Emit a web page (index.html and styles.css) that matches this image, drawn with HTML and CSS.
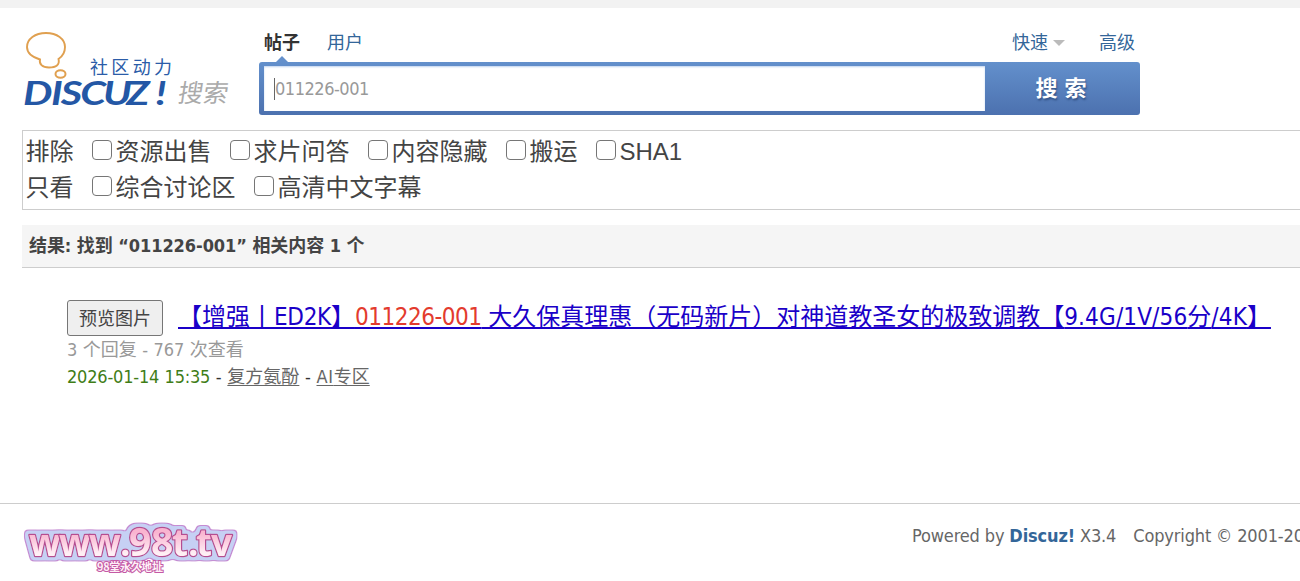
FILE: index.html
```html
<!DOCTYPE html>
<html lang="zh-CN">
<head>
    <meta charset="UTF-8">
    <meta name="viewport" content="width=device-width, initial-scale=1.0">
    <title>搜索</title>
    <link rel="stylesheet" href="styles.css">
</head>
<body>
  <div class="topbar"></div>

  <div class="header">
    <svg class="logo" width="208" height="92" viewBox="0 0 208 92">
      <path d="M18 30.500 C10 28 5 24 5 18 C5 10 13 4 24 4 C35 4 43 10 43 18 C43 24 41 27 36.500 30 C38 36 34 38.500 27 38.500 C20 38.500 17 35 18 30.500 Z" fill="none" stroke="#e0a050" stroke-width="1.9"/>
      <ellipse cx="38.500" cy="45" rx="5" ry="3.800" fill="none" stroke="#e0a050" stroke-width="2"/>
      <text class="logo-sub" x="68" y="45" textLength="82">社区动力</text>
      <text class="logo-name" transform="translate(1 76) scale(1.300 1)" x="0 21.500 29 44 61.500 79.500 102">DISCUZ!</text>
      <text class="logo-search" transform="translate(155 73) skewX(-9)" textLength="50">搜索</text>
    </svg>

    <div class="search">
      <div class="tabs">
        <a class="tab active" href="#">帖子</a>
        <a class="tab" href="#">用户</a>
        <a class="tab quick" href="#">快速<i class="arrow"></i></a>
        <a class="tab" href="#">高级</a>
      </div>
      <form class="search-form">
        <div class="search-input"><span class="caret"></span><span class="lat">011226-001</span></div>
        <button type="button" class="search-btn">搜 索</button>
      </form>
    </div>
  </div>

  <div class="filter">
    <div class="filter-row">
      <span class="filter-name">排除</span>
      <label><input type="checkbox">资源出售</label>
      <label><input type="checkbox">求片问答</label>
      <label><input type="checkbox">内容隐藏</label>
      <label><input type="checkbox">搬运</label>
      <label><input type="checkbox">SHA1</label>
    </div>
    <div class="filter-row">
      <span class="filter-name">只看</span>
      <label><input type="checkbox">综合讨论区</label>
      <label><input type="checkbox">高清中文字幕</label>
    </div>
  </div>

  <h2 class="result-title">结果: 找到 “011226-001” 相关内容 1 个</h2>

  <div class="result">
    <div class="result-head">
      <button type="button" class="preview">预览图片</button>
      <a class="thread" href="#">【增强丨<span class="lat">ED2K</span>】<em>011226-001</em> 大久保真理惠（无码新片）对神道教圣女的极致调教【<span class="size">9.4G/1V/56</span>分<span class="size">/4K</span>】</a>
    </div>
    <p class="count">3 个回复 - 767 次查看</p>
    <p class="info"><span class="date">2026-01-14 15:35</span> - <a href="#">复方氨酚</a> - <a href="#"><span class="ai">AI</span>专区</a></p>
  </div>

  <div class="footer">
    <svg class="site-logo" width="220" height="66" viewBox="0 0 220 66">
      <defs>
        <linearGradient id="pink" x1="0" y1="0" x2="0" y2="1">
          <stop offset="0.35" stop-color="#f9b4d0"/>
          <stop offset="0.75" stop-color="#fff0f5"/>
        </linearGradient>
        <filter id="outline" x="-10%" y="-20%" width="120%" height="140%">
          <feMorphology in="SourceAlpha" operator="dilate" radius="3" result="big"/>
          <feGaussianBlur in="big" stdDeviation="1.500" result="soft"/>
          <feComponentTransfer in="soft" result="edgeShape">
            <feFuncA type="linear" slope="5" intercept="-0.6"/>
          </feComponentTransfer>
          <feFlood flood-color="#c48ad2"/>
          <feComposite in2="edgeShape" operator="in" result="edge"/>
          <feMorphology in="edgeShape" operator="erode" radius="1" result="inner"/>
          <feFlood flood-color="#c6d0f4"/>
          <feComposite in2="inner" operator="in" result="glow"/>
          <feMerge>
            <feMergeNode in="edge"/>
            <feMergeNode in="glow"/>
            <feMergeNode in="SourceGraphic"/>
          </feMerge>
        </filter>
      </defs>
      <text class="site-name" y="42" x="9 39 69 100 109 131 152 168 176 191" filter="url(#outline)">www.<tspan class="big">98</tspan>t.tv</text>
      <text class="site-sub" x="77" y="57" textLength="66">98堂永久地址</text>
    </svg>
    <p class="copyright"><span>Powered by <b>Discuz!</b> X3.4</span><span>Copyright © 2001-2021</span></p>
  </div>
</body>
</html>
```
FILE: styles.css
```css
body{
    margin: 0;
    height: 581px;
    overflow: hidden;
    background-color: white;
    color: #444;
    font-family: "DejaVu Sans Condensed", "Noto Sans CJK SC", sans-serif;
    font-size: 18px;
}
p, h2{
    margin: 0;
}
a{
    text-decoration: none;
}
.lat{
    letter-spacing: -0.026em;
}
.topbar{
    height: 8px;
    background-color: #f2f2f2;
}
.header{
    display: flex;
    height: 122px;
    padding-left: 22px;
    box-sizing: border-box;
}
.logo{
    margin-top: 21px;
}
.logo-sub{
    font-family: "Noto Sans CJK SC", sans-serif;
    font-size: 18px;
    fill: #2b5ca8;
}
.logo-name{
    font-family: Lato, sans-serif;
    font-size: 32px;
    font-weight: bold;
    font-style: italic;
    fill: #2457a5;
}
.logo-search{
    font-family: "Noto Sans CJK SC", sans-serif;
    font-size: 25px;
    fill: #aaa;
}
.search{
    width: 881px;
    margin-left: 29px;
}
.tabs{
    display: flex;
    height: 54px;
    line-height: 70px;
    padding: 0 5px;
    gap: 27px;
}
.tab{
    position: relative;
    color: #369;
}
.tab.active{
    color: #333;
    font-weight: bold;
}
.tab.active::after{
    content: "";
    position: absolute;
    left: 12px;
    top: 48px;
    border: 6px solid transparent;
    border-top: 0;
    border-bottom-color: #6490cb;
}
.quick{
    display: flex;
    align-items: center;
    height: 70px;
    margin-left: auto;
    margin-right: 7px;
}
.arrow{
    margin-left: 5px;
    border: 6px solid transparent;
    border-top-color: #bbb;
    border-bottom: 0;
}
.search-form{
    display: flex;
    height: 53px;
    padding: 4px 0 4px 5px;
    box-sizing: border-box;
    border-radius: 3px;
    background: linear-gradient(#6390cc, #4c71af);
}
.search-input{
    display: flex;
    align-items: center;
    width: 721px;
    padding-left: 10px;
    box-sizing: border-box;
    background-color: white;
    box-shadow: inset 0 1px 2px #bfd3ef;
    color: #999;
}
.caret{
    width: 1px;
    height: 22px;
    background-color: #666;
}
.search-btn{
    flex: 1;
    padding: 0 3px 5px 0;
    border: none;
    background: none;
    color: white;
    font-family: "Noto Sans CJK SC", sans-serif;
    font-size: 22px;
    font-weight: bold;
    word-spacing: 2px;
    text-shadow: 1px 2px 2px #345488;
}
.filter{
    height: 80px;
    margin-left: 22px;
    padding: 3px 3px 3px 2.5px;
    box-sizing: border-box;
    border: 1px solid #cdcdcd;
    border-right: none;
    font-family: "Liberation Sans", "Noto Sans CJK SC", sans-serif;
    font-size: 24px;
}
.filter-row{
    display: flex;
    gap: 18px;
    height: 36px;
    line-height: 36px;
}
.filter-row label{
    display: flex;
    align-items: center;
}
.filter-row input{
    appearance: none;
    width: 20px;
    height: 20px;
    margin: 0 4px 4px 0;
    border: 1.5px solid #767676;
    border-radius: 4px;
    background-color: white;
}
.result-title{
    height: 43px;
    margin: 15px 0 0 22px;
    padding-left: 7px;
    box-sizing: border-box;
    border-bottom: 1px solid #cdcdcd;
    background-color: #f5f5f5;
    font-size: 18px;
    line-height: 41px;
    letter-spacing: -0.07px;
}
.result{
    height: 235px;
    padding: 32px 0 0 67px;
    box-sizing: border-box;
    white-space: nowrap;
}
.result-head{
    display: flex;
    height: 36px;
}
.preview{
    width: 96px;
    height: 36px;
    margin-right: 15px;
    padding: 0 0 2px;
    border: 1px solid #767676;
    border-radius: 3px;
    background-color: #efefef;
    color: #444;
    font-family: "Noto Sans CJK SC", sans-serif;
    font-size: 18px;
}
.thread{
    color: #1a00c8;
    font-size: 24px;
    line-height: 35px;
    text-decoration: underline;
    text-decoration-thickness: 2px;
    text-underline-offset: 2px;
    text-decoration-skip-ink: none;
}
.thread .lat{
    letter-spacing: -0.3px;
}
.thread em{
    color: #e33b2e;
    font-style: normal;
    letter-spacing: -0.5px;
}
.size{
    letter-spacing: 0.15px;
}
.count{
    color: #999;
    line-height: 27px;
    word-spacing: 0.3px;
}
.info{
    color: #333;
    line-height: 27px;
    word-spacing: 0.5px;
}
.info .date{
    color: #3f7d17;
    letter-spacing: -0.2px;
}
.info a{
    color: #666;
    text-decoration: underline;
    text-underline-offset: 2px;
}
.ai{
    letter-spacing: 0.7px;
}
.footer{
    display: flex;
    height: 78px;
    border-top: 1px solid #cdcdcd;
    white-space: nowrap;
}
.site-logo{
    flex: none;
    margin: 10px 0 0 20px;
}
.site-name{
    font-family: "Open Sans", sans-serif;
    font-size: 37px;
    font-weight: bold;
    fill: url(#pink);
    stroke: #b54d91;
    stroke-width: 2.5px;
    stroke-linejoin: round;
    paint-order: stroke;
}
.site-name .big{
    font-size: 39px;
}
.site-sub{
    font-family: "Noto Sans CJK SC", sans-serif;
    font-size: 11px;
    font-weight: bold;
    fill: #fff0f7;
    stroke: #c45aa5;
    stroke-width: 2px;
    paint-order: stroke;
}
.copyright{
    display: flex;
    gap: 17px;
    margin-left: 672px;
    color: #666;
    line-height: 64px;
    letter-spacing: -0.14px;
}
.copyright b{
    color: #369;
}
```
